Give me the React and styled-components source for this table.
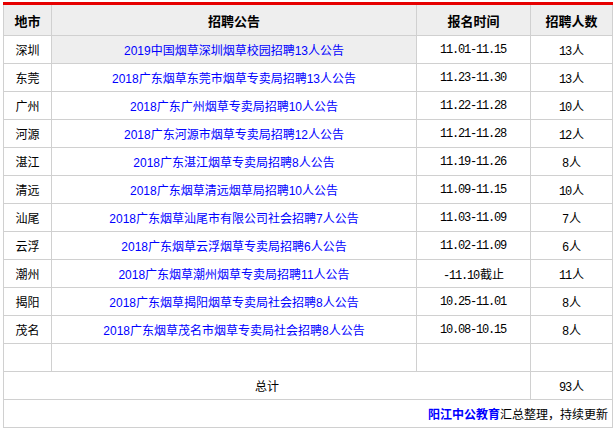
import React from 'react';
import styled, { createGlobalStyle } from 'styled-components';

const rows = [
    { city: '深圳', title: '2019中国烟草深圳烟草校园招聘13人公告', time: '11.01-11.15', num: '13人', active: true },
    { city: '东莞', title: '2018广东烟草东莞市烟草专卖局招聘13人公告', time: '11.23-11.30', num: '13人' },
    { city: '广州', title: '2018广东广州烟草专卖局招聘10人公告', time: '11.22-11.28', num: '10人' },
    { city: '河源', title: '2018广东河源市烟草专卖局招聘12人公告', time: '11.21-11.28', num: '12人' },
    { city: '湛江', title: '2018广东湛江烟草专卖局招聘8人公告', time: '11.19-11.26', num: '8人' },
    { city: '清远', title: '2018广东烟草清远烟草局招聘10人公告', time: '11.09-11.15', num: '10人' },
    { city: '汕尾', title: '2018广东烟草汕尾市有限公司社会招聘7人公告', time: '11.03-11.09', num: '7人' },
    { city: '云浮', title: '2018广东烟草云浮烟草专卖局招聘6人公告', time: '11.02-11.09', num: '6人' },
    { city: '潮州', title: '2018广东烟草潮州烟草专卖局招聘11人公告', time: '-11.10截止', num: '11人' },
    { city: '揭阳', title: '2018广东烟草揭阳烟草专卖局社会招聘8人公告', time: '10.25-11.01', num: '8人' },
    { city: '茂名', title: '2018广东烟草茂名市烟草专卖局社会招聘8人公告', time: '10.08-10.15', num: '8人' },
];

// digits get the narrow mono look, chinese stays normal
const MonoText = ({ text }) =>
    text.split(/([\x00-\x7f]+)/).filter(Boolean).map((part, i) =>
        /^[\x00-\x7f]+$/.test(part) ? <Digits key={i}>{part}</Digits> : <span key={i}>{part}</span>
    );

const App = () => {
    return (
        <>
            <GlobalStyle />
            <Wrap>
                <Table>
                    <colgroup>
                        <col style={{ width: 48 }} />
                        <col style={{ width: 365 }} />
                        <col style={{ width: 114 }} />
                        <col style={{ width: 82 }} />
                    </colgroup>
                    <thead>
                        <tr>
                            <HeadCell>地市</HeadCell>
                            <HeadCell>招聘公告</HeadCell>
                            <HeadCell>报名时间</HeadCell>
                            <HeadCell>招聘人数</HeadCell>
                        </tr>
                    </thead>
                    <tbody>
                        {rows.map((r) => (
                            <tr key={r.city}>
                                <Cell>{r.city}</Cell>
                                <Cell $active={r.active}>
                                    <Link href="#">{r.title}</Link>
                                </Cell>
                                <Cell><MonoText text={r.time} /></Cell>
                                <Cell><MonoText text={r.num} /></Cell>
                            </tr>
                        ))}
                        <tr>
                            <Cell />
                            <Cell />
                            <Cell />
                            <Cell />
                        </tr>
                        <tr>
                            <Cell colSpan={3}>总计</Cell>
                            <Cell><MonoText text="93人" /></Cell>
                        </tr>
                        <tr>
                            <FootCell colSpan={4}>
                                <Brand>阳江中公教育</Brand>汇总整理，持续更新
                            </FootCell>
                        </tr>
                    </tbody>
                </Table>
            </Wrap>
        </>
    );
};

// Styles

const GlobalStyle = createGlobalStyle`
    body {
        margin: 0;
        background: #FFFFFF;
        font-family: "Liberation Sans", "Noto Sans CJK SC", sans-serif;
        font-size: 12px;
        color: #000000;
    }
`

const Wrap = styled.div`
    padding: 2px 0 0 3px;
`

const Table = styled.table`
    width: 610px;
    table-layout: fixed;
    border-collapse: collapse;
    border-top: 3px solid #E60000;
`

const HeadCell = styled.th`
    height: 30px;
    padding: 0;
    border: 1px solid #D0D0D0;
    border-top: none;
    background-color: #EEEEEE;
    font-family: "Noto Sans CJK SC", sans-serif;
    font-size: 13px;
    font-weight: bold;
    text-align: center;
    vertical-align: middle;
`

const Cell = styled.td`
    height: 27px;
    padding: 0;
    border: 1px solid #D0D0D0;
    background-color: ${(p) => (p.$active ? '#EEEEEE' : '#FFFFFF')};
    font-family: "Liberation Sans", "Noto Sans CJK SC", sans-serif;
    font-size: 12px;
    text-align: center;
    vertical-align: middle;
    white-space: nowrap;
`

const Digits = styled.span`
    font-family: "Liberation Mono", monospace;
    letter-spacing: -1.2px;
    margin-right: 1px;
`

const Link = styled.a`
    color: #0000FF;
    text-decoration: none;
`

const FootCell = styled.td`
    height: 27px;
    padding: 0 4px 0 0;
    border: 1px solid #D0D0D0;
    font-size: 12px;
    text-align: right;
    vertical-align: middle;
`

const Brand = styled.b`
    color: #0000FF;
`

export default App;
